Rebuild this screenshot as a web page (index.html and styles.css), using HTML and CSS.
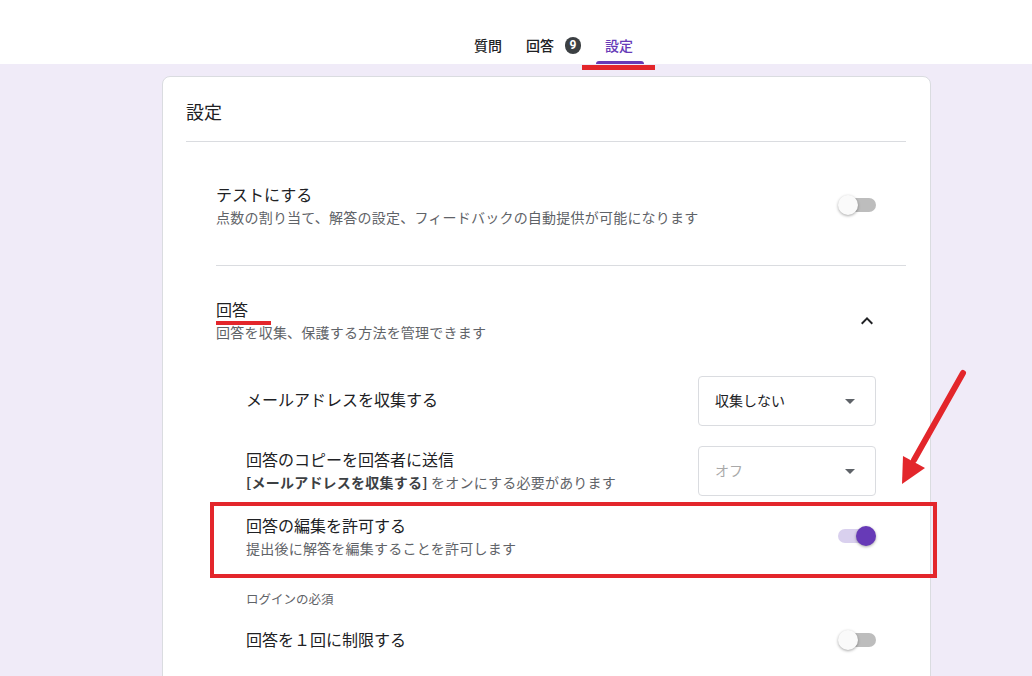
FILE: index.html
```html
<!DOCTYPE html>
<html lang="ja">
<head>
<meta charset="utf-8">
<title>設定</title>
<link rel="stylesheet" href="styles.css">
</head>
<body>
<header class="header">
  <div class="tab">質問</div>
  <div class="tab">回答<span class="badge">9</span></div>
  <div class="tab active">設定</div>
</header>
<main class="main">
  <div class="card">
    <div class="card-title">設定</div>
    <div class="section section-test">
      <div class="text">
        <div class="title">テストにする</div>
        <div class="sub">点数の割り当て、解答の設定、フィードバックの自動提供が可能になります</div>
      </div>
      <div class="toggle"><span class="track"></span><span class="knob"></span></div>
    </div>
    <div class="section section-resp">
      <div class="resp-head">
        <div class="text">
          <div class="title">回答</div>
          <div class="sub">回答を収集、保護する方法を管理できます</div>
        </div>
        <svg class="chevron" viewBox="0 0 24 24" width="24" height="24"><path d="M12 8l-6 6 1.41 1.41L12 10.83l4.59 4.58L18 14z" fill="#202124"/></svg>
      </div>
      <div class="subrow row-mail">
        <div class="title single">メールアドレスを収集する</div>
        <div class="select"><span class="select-text">収集しない</span><span class="caret"></span></div>
      </div>
      <div class="subrow row-copy">
        <div class="text">
          <div class="title">回答のコピーを回答者に送信</div>
          <div class="sub"><b class="strong">[メールアドレスを収集する]</b> をオンにする必要があります</div>
        </div>
        <div class="select"><span class="select-text placeholder">オフ</span><span class="caret"></span></div>
      </div>
      <div class="subrow row-edit">
        <div class="text">
          <div class="title">回答の編集を許可する</div>
          <div class="sub">提出後に解答を編集することを許可します</div>
        </div>
        <div class="toggle on"><span class="track"></span><span class="knob"></span></div>
      </div>
      <div class="group-label">ログインの必須</div>
      <div class="subrow row-limit">
        <div class="title">回答を１回に制限する</div>
        <div class="toggle"><span class="track"></span><span class="knob"></span></div>
      </div>
    </div>
  </div>
</main>
<div class="mark mark-tab"></div>
<div class="mark mark-title"></div>
<div class="mark-box"></div>
<svg class="arrow" viewBox="0 0 80 125" width="80" height="125">
  <line x1="68" y1="8" x2="19" y2="95" stroke="#e3262b" stroke-width="6" stroke-linecap="round"/>
  <polygon points="7,119 8,91 30,103" fill="#e3262b"/>
</svg>
</body>
</html>
```

FILE: styles.css
```css
html, body {
  margin: 0;
  padding: 0;
}
body {
  font-family: "Noto Sans CJK JP", "Noto Sans", sans-serif;
  background: #f0ebf8;
  color: #202124;
  position: relative;
  height: 676px;
  overflow: hidden;
}
.header {
  height: 64px;
  background: #fff;
  display: flex;
  padding-left: 462px;
  box-sizing: border-box;
}
.tab {
  position: relative;
  display: flex;
  align-items: flex-start;
  padding: 35px 12px 0;
  font-size: 14px;
  line-height: 20px;
  font-weight: 500;
  color: #202124;
}
.tab.active {
  color: #673ab7;
}
.tab.active::after {
  content: "";
  position: absolute;
  left: 3px;
  right: 1px;
  bottom: 0;
  height: 3px;
  background: #673ab7;
  border-radius: 3px 3px 0 0;
}
.badge {
  display: inline-flex;
  align-items: center;
  justify-content: center;
  width: 16px;
  height: 17px;
  margin: 2px 0 0 11px;
  border-radius: 8px;
  background: #3c4043;
  color: #fff;
  font-size: 12px;
  font-weight: 700;
  line-height: 17px;
  font-family: "Roboto", "Liberation Sans", sans-serif;
}
.main {
  padding: 12px 0 0 162px;
}
.card {
  width: 769px;
  height: 620px;
  box-sizing: border-box;
  background: #fff;
  border: 1px solid #dadce0;
  border-radius: 8px;
  padding: 0 24px 0 23px;
  overflow: hidden;
}
.card-title {
  font-size: 18px;
  line-height: 24px;
  padding: 22px 0 18px;
  border-bottom: 1px solid #dadce0;
}
.section {
  margin-left: 30px;
}
.title {
  font-size: 16px;
  line-height: 24px;
  color: #202124;
}
.title.single {
  padding-bottom: 4px;
}
.sub {
  font-size: 14px;
  line-height: 22px;
  color: #5f6368;
  letter-spacing: 0.22px;
}
.strong {
  font-weight: 700;
  color: #3c4043;
}
.section-test {
  display: flex;
  align-items: center;
  justify-content: space-between;
  padding: 40px 30px 37px 0;
  border-bottom: 1px solid #dadce0;
}
.section-resp {
  padding-top: 31px;
}
.resp-head {
  display: flex;
  align-items: center;
  justify-content: space-between;
  padding-right: 27px;
}
.chevron {
  margin-top: 2px;
}
.subrow {
  display: flex;
  align-items: center;
  justify-content: space-between;
  margin: 0 30px 0 30px;
}
.row-mail {
  margin-top: 33px;
  height: 50px;
}
.row-copy {
  margin-top: 20px;
  height: 50px;
}
.row-copy .text {
  margin-top: -2px;
}
.row-edit {
  margin-top: 17px;
  height: 46px;
}
.group-label {
  margin: 31px 0 0 30px;
  font-size: 12.5px;
  line-height: 18px;
  color: #5f6368;
}
.row-limit {
  margin-top: 19px;
  height: 24px;
}
.row-limit .toggle {
  margin-top: 2px;
}
.select {
  width: 178px;
  height: 50px;
  box-sizing: border-box;
  border: 1px solid #dadce0;
  border-radius: 4px;
  display: flex;
  align-items: center;
  justify-content: space-between;
  padding: 0 20px 3px 16px;
}
.select-text {
  font-size: 14px;
  color: #202124;
}
.select-text.placeholder {
  color: #a9a9a9;
}
.caret {
  width: 0;
  height: 0;
  margin-top: 3px;
  border-left: 5px solid transparent;
  border-right: 5px solid transparent;
  border-top: 5px solid #5f6368;
}
.toggle {
  position: relative;
  width: 38px;
  height: 20px;
  flex: none;
}
.toggle .track {
  position: absolute;
  left: 4px;
  right: 0;
  top: 3px;
  height: 14px;
  border-radius: 7px;
  background: #bdbdbd;
}
.toggle .knob {
  position: absolute;
  left: 0;
  top: 0;
  width: 20px;
  height: 20px;
  border-radius: 50%;
  background: #fafafa;
  box-shadow: 0 1px 3px rgba(0, 0, 0, 0.35);
}
.toggle.on .track {
  left: 0;
  right: 4px;
  background: #d9d0ee;
}
.toggle.on .knob {
  left: 18px;
  background: #673ab7;
}
.mark {
  position: absolute;
  background: #e3262b;
}
.mark-tab {
  left: 582px;
  top: 65px;
  width: 73px;
  height: 5px;
}
.mark-title {
  left: 216px;
  top: 321px;
  width: 55px;
  height: 4px;
}
.mark-box {
  position: absolute;
  left: 210px;
  top: 502px;
  width: 727px;
  height: 76px;
  box-sizing: border-box;
  border: 4px solid #e3262b;
}
.arrow {
  position: absolute;
  left: 895px;
  top: 365px;
}
```
